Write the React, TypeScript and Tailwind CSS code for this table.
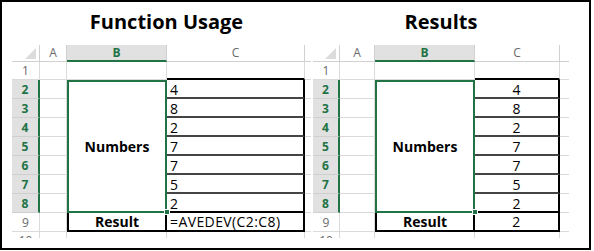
import React from 'react';
import clsx from 'clsx';

const numbers = [4, 8, 2, 7, 7, 5, 2];

const gridCell = 'border-r border-b border-[#dadada]';

function HeadCell({ label }: { label: string }) {
  return (
    <div className="flex items-center justify-center border-r border-b border-[#d0d0d0] text-[12px] leading-none text-[#6a6a6a]">
      {label}
    </div>
  );
}

function RowHead({ n, selected }: { n: number; selected?: boolean }) {
  return (
    <div
      className={clsx(
        'flex items-end justify-center pb-[2px] text-[12px] leading-none',
        selected
          ? 'border-r-2 border-b border-r-[#217346] border-b-[#cfcfcf] bg-[#e1e1e1] font-bold text-[#217346]'
          : 'border-r border-b border-[#dadada] text-[#6a6a6a]'
      )}
    >
      {n}
    </div>
  );
}

function Sheet({ usage }: { usage: boolean }) {
  const valueAlign = usage ? 'justify-start pl-[3px]' : 'justify-center';
  return (
    <div
      className={clsx(
        'grid grid-rows-[17px_18px_repeat(8,19px)_6px] text-black',
        usage ? 'grid-cols-[28px_27px_100px_138px_6px]' : 'grid-cols-[27px_35px_100px_85px_9px]'
      )}
    >
      {/* column headers */}
      <div className="flex items-end justify-end border-r border-b border-[#d0d0d0] pr-[3px] pb-[2px]">
        <svg width="11" height="11" viewBox="0 0 11 11">
          <path d="M11 0V11H0Z" fill="#dcdcdc" />
        </svg>
      </div>
      <HeadCell label="A" />
      <div className="flex items-center justify-center border-r border-b-2 border-r-[#d0d0d0] border-b-[#217346] bg-[#e1e1e1] text-[12px] leading-none font-bold text-[#217346]">
        B
      </div>
      <HeadCell label="C" />
      <div className="border-b border-[#d0d0d0]" />

      {/* row 1 */}
      <RowHead n={1} />
      <div className={gridCell} />
      <div className={gridCell} />
      <div className="border-r border-b-2 border-r-[#dadada] border-b-black" />
      <div className="border-b border-[#dadada]" />

      {/* rows 2-8 */}
      {numbers.map((v, i) => (
        <React.Fragment key={i}>
          <RowHead n={i + 2} selected />
          <div className={gridCell} />
          {i === 0 && (
            <div className="relative row-span-7 flex items-center justify-center border-2 border-[#217346] text-[14px] font-bold">
              Numbers
              <span className="absolute -right-[5px] -bottom-[4px] h-[6px] w-[6px] border border-white bg-[#217346]" />
            </div>
          )}
          <div
            className={clsx(
              'flex items-end border-r-2 border-b-2 border-r-black pb-[1px] text-[14px] leading-[13px]',
              i === 6 ? 'border-b-black' : 'border-b-[#444]',
              valueAlign
            )}
          >
            {v}
          </div>
          <div className="border-b border-[#dadada]" />
        </React.Fragment>
      ))}

      {/* row 9 */}
      <RowHead n={9} />
      <div className={gridCell} />
      <div className="flex items-center justify-center border-x-2 border-b-2 border-black text-[14px] font-bold">
        Result
      </div>
      <div className={clsx('flex items-center border-r-2 border-b-2 border-black text-[14px] tracking-[0.4px]', valueAlign)}>
        {usage ? '=AVEDEV(C2:C8)' : '2'}
      </div>
      <div className="border-b border-[#dadada]" />

      {/* row 10, cut off */}
      <div className="overflow-hidden border-r border-[#dadada] pt-[3px] text-center text-[12px] leading-none text-[#6a6a6a]">
        10
      </div>
      <div className="border-r border-[#dadada]" />
      <div className="border-r border-[#dadada]" />
      <div className="border-r border-[#dadada]" />
      <div />
    </div>
  );
}

export default function App() {
  return (
    <div className="h-[251px] w-[594px] bg-white font-['Open_Sans',sans-serif]">
      <div className="flex h-[250px] w-[591px] gap-[2px] border-2 border-black pl-[10px]">
        <div className="flex w-[299px] flex-col">
          <div className="h-[43px] pt-[10px] pl-[10px] text-center text-[20px] leading-none font-bold">
            Function Usage
          </div>
          <Sheet usage />
        </div>
        <div className="flex w-[256px] flex-col">
          <div className="h-[43px] pt-[10px] text-center text-[20px] leading-none font-bold">Results</div>
          <Sheet usage={false} />
        </div>
      </div>
    </div>
  );
}
